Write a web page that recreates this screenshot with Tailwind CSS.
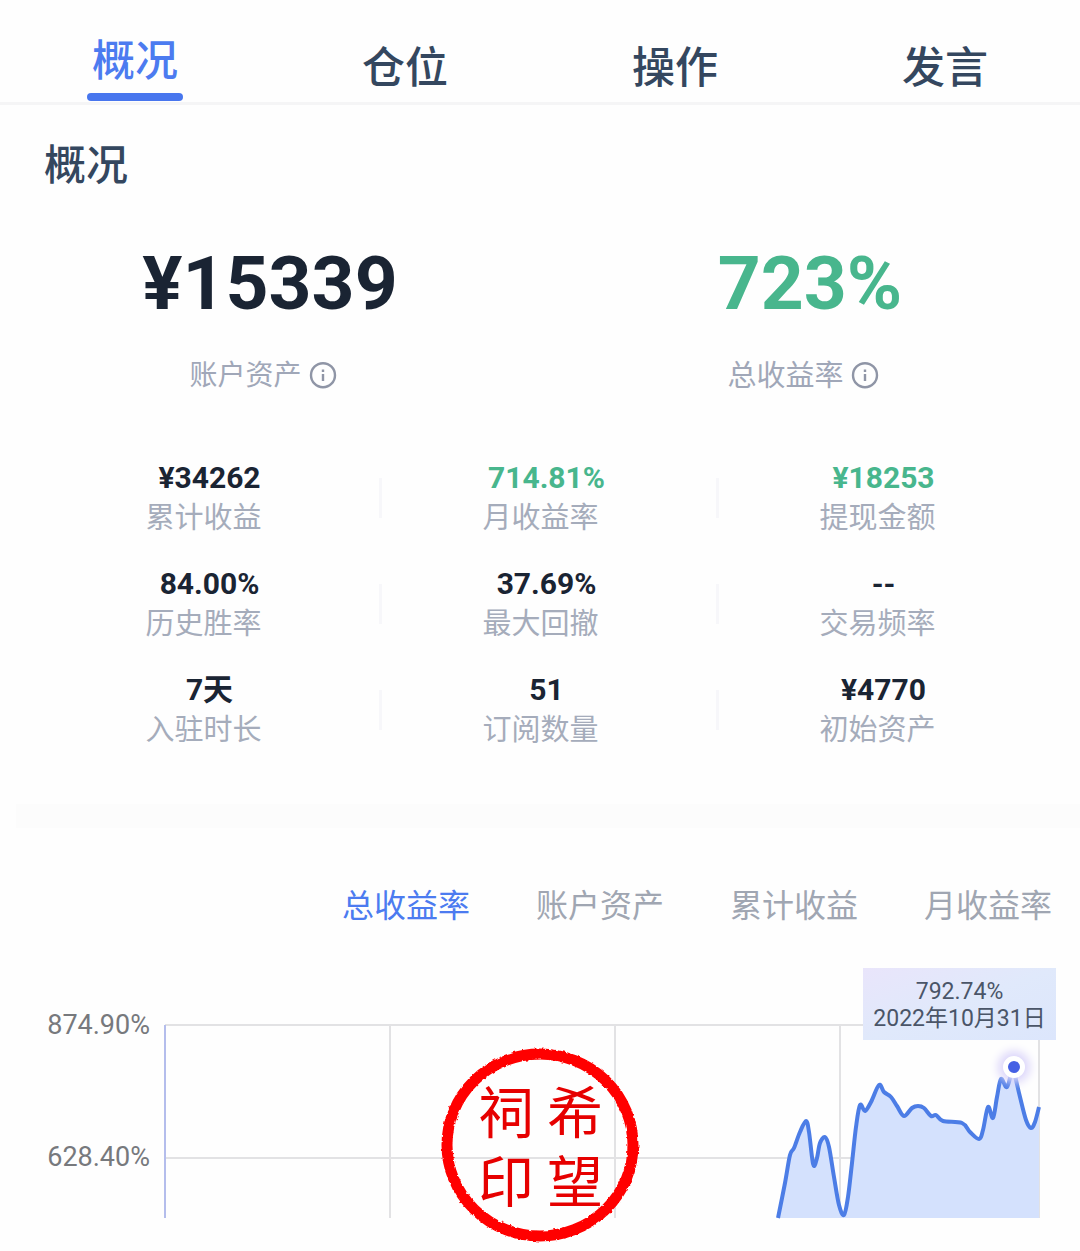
<!DOCTYPE html>
<html lang="zh-CN">
<head>
    <meta charset="UTF-8">
    <meta name="viewport" content="width=device-width, initial-scale=1.0">
    <title>概况</title>
    <script src="https://cdn.jsdelivr.net/npm/@tailwindcss/browser@4"></script>
    <script>
        document.addEventListener('DOMContentLoaded', function() {
            // Points of the return curve, in the 875 x 193 plot area
            const points = [
                [613,193],[620,158],[625,130],[629,123],[635,107],[641,96],[644,107],[647,132],[649,141],[652,133],
                [655,118],[660,112],[664,122],[669,152],[674,180],[679,190],[683,172],[687,138],[691,102],[695,80],
                [700,86],[706,77],[714,60],[719,67],[726,72],[732,81],[739,91],[747,83],[753,81],[759,83],[766,91],
                [771,90],[778,96],[797,98],[805,107],[814,114],[818,105],[823,82],[828,93],[832,72],[836,54],
                [842,62],[848,43],[851,55],[855,72],[861,95],[866,103],[870,97],[874,82]
            ];
            let line = `M${points[0]}`;
            for (let i = 0; i < points.length - 1; i++) {
                const p0 = points[i - 1] || points[i];
                const p1 = points[i];
                const p2 = points[i + 1];
                const p3 = points[i + 2] || p2;
                line += ` C${p1[0] + (p2[0] - p0[0]) / 6},${p1[1] + (p2[1] - p0[1]) / 6}`;
                line += ` ${p2[0] - (p3[0] - p1[0]) / 6},${p2[1] - (p3[1] - p1[1]) / 6} ${p2}`;
            }
            document.getElementById('curve').setAttribute('d', line);
            document.getElementById('area').setAttribute('d', `${line} V193 H613 Z`);
        });
    </script>
</head>
<body class="bg-[#fefefe] font-[Roboto,'Noto_Sans_CJK_SC',sans-serif] text-[#1a2433]">
    <nav class="grid h-[105px] grid-cols-4 border-b-3 border-[#f5f5f6] text-[43px] leading-[64px] font-medium text-[#34475f]">
        <button class="flex flex-col items-center pt-[29px] text-[#4c7bf0]">概况<span class="h-2 w-24 rounded-sm bg-[#4876ee]"></span></button>
        <button class="flex justify-center pt-[36px]">仓位</button>
        <button class="flex justify-center pt-[36px]">操作</button>
        <button class="flex justify-center pt-[36px]">发言</button>
    </nav>

    <main>
        <!-- Account overview -->
        <section>
            <h1 class="pt-[29px] pl-[44px] text-[42px] leading-[64px] font-medium text-[#34475f]">概况</h1>
            <div class="mt-[45px] grid grid-cols-2 text-center">
                <div>
                    <p class="text-[75px] leading-[80px] font-bold">¥15339</p>
                    <p class="mt-[33px] flex items-center justify-center gap-[7px] pr-[14px] text-[28px] leading-[40px] text-[#a0a7b8]">账户资产
                        <svg class="size-7" viewBox="0 0 28 28" fill="none" stroke="#8f95a6" stroke-width="2.4"><circle cx="14" cy="13.2" r="12"/><path d="M14 12v7M14 7.5v2.6"/></svg>
                    </p>
                </div>
                <div>
                    <p class="text-[75px] leading-[80px] font-bold text-[#48b68d]">723%</p>
                    <p class="mt-[33px] flex items-center justify-center gap-[7px] pr-[14px] text-[29px] leading-[40px] text-[#a0a7b8]">总收益率
                        <svg class="size-7" viewBox="0 0 28 28" fill="none" stroke="#8f95a6" stroke-width="2.4"><circle cx="14" cy="13.2" r="12"/><path d="M14 12v7M14 7.5v2.6"/></svg>
                    </p>
                </div>
            </div>

            <dl class="mt-[62px] grid grid-cols-3 gap-y-[26px] pr-[34px] pl-[35px] text-center text-[29px] leading-[40px] text-[#a5acbb]">
                <div class="relative flex flex-col-reverse after:absolute after:top-5 after:-right-[10px] after:h-10 after:w-[3px] after:bg-[#f7f7fa]">
                    <dt>累计收益</dt>
                    <dd class="pl-3 text-[30px] font-bold text-[#1a2433]">¥34262</dd>
                </div>
                <div class="relative flex flex-col-reverse after:absolute after:top-5 after:-right-[10px] after:h-10 after:w-[3px] after:bg-[#f7f7fa]">
                    <dt>月收益率</dt>
                    <dd class="pl-3 text-[30px] font-bold text-[#48b68d]">714.81%</dd>
                </div>
                <div class="flex flex-col-reverse">
                    <dt>提现金额</dt>
                    <dd class="pl-3 text-[30px] font-bold text-[#48b68d]">¥18253</dd>
                </div>
                <div class="relative flex flex-col-reverse after:absolute after:top-5 after:-right-[10px] after:h-10 after:w-[3px] after:bg-[#f7f7fa]">
                    <dt>历史胜率</dt>
                    <dd class="pl-3 text-[30px] font-bold text-[#1a2433]">84.00%</dd>
                </div>
                <div class="relative flex flex-col-reverse after:absolute after:top-5 after:-right-[10px] after:h-10 after:w-[3px] after:bg-[#f7f7fa]">
                    <dt>最大回撤</dt>
                    <dd class="pl-3 text-[30px] font-bold text-[#1a2433]">37.69%</dd>
                </div>
                <div class="flex flex-col-reverse">
                    <dt>交易频率</dt>
                    <dd class="pl-3 text-[30px] font-bold text-[#1a2433]">--</dd>
                </div>
                <div class="relative flex flex-col-reverse after:absolute after:top-5 after:-right-[10px] after:h-10 after:w-[3px] after:bg-[#f7f7fa]">
                    <dt>入驻时长</dt>
                    <dd class="pl-3 text-[30px] font-bold text-[#1a2433]">7天</dd>
                </div>
                <div class="relative flex flex-col-reverse after:absolute after:top-5 after:-right-[10px] after:h-10 after:w-[3px] after:bg-[#f7f7fa]">
                    <dt>订阅数量</dt>
                    <dd class="pl-3 text-[30px] font-bold text-[#1a2433]">51</dd>
                </div>
                <div class="flex flex-col-reverse">
                    <dt>初始资产</dt>
                    <dd class="pl-3 text-[30px] font-bold text-[#1a2433]">¥4770</dd>
                </div>
            </dl>
        </section>

        <div class="mt-[54px] ml-4 h-6 bg-[#fcfcfc]"></div>

        <!-- Return chart -->
        <section>
            <div class="mt-[54px] flex justify-end gap-[66px] pr-7 text-[32px] leading-[48px] text-[#a0a6b2]">
                <button class="text-[#4c7bf0]">总收益率</button>
                <button>账户资产</button>
                <button>累计收益</button>
                <button>月收益率</button>
            </div>

            <div class="mt-[95px] flex pr-10 pb-8">
                <div class="w-[165px] shrink-0 pr-[15px] text-right text-[27px] leading-[32px] text-[#77797d]">
                    <p class="-mt-4">874.90%</p>
                    <p class="mt-[100px]">628.40%</p>
                </div>
                <div class="relative h-[193px] grow">
                    <svg class="size-full overflow-visible" viewBox="0 0 875 193" preserveAspectRatio="none" fill="none">
                        <path d="M0 0H875M0 133H875M225 0V193M450 0V193M675 0V193M874 0V193" stroke="#e2e2e4" stroke-width="2" vector-effect="non-scaling-stroke"/>
                        <path d="M0 0V193" stroke="#b4bdec" stroke-width="2" vector-effect="non-scaling-stroke"/>
                        <path id="area" fill="#d4e1fd"/>
                        <path id="curve" stroke="#4c7de6" stroke-width="4" stroke-linejoin="round" vector-effect="non-scaling-stroke"/>
                    </svg>
                    <span class="absolute top-[22%] left-[97%] size-[22px] -translate-1/2 rounded-full border-[5px] border-white bg-[#4560e4] shadow-[0_0_10px_5px_#dcd6fa]"></span>
                    <div class="absolute -top-[57px] -right-4 w-[193px] bg-linear-to-br from-[#e9e5fb] via-[#e0e9fb] to-[#dce6fc] pt-[10px] pb-[8px] text-center text-[23px] leading-[27px] text-[#4a5568]">
                        <p>792.74%</p>
                        <p class="whitespace-nowrap">2022年10月31日</p>
                    </div>
                    <!-- Seal -->
                    <svg class="absolute top-[20px] left-[43%] h-[200px] w-[200px] -translate-x-1/2" viewBox="0 0 200 200">
                        <filter id="rough" x="-5%" y="-5%" width="110%" height="110%">
                            <feTurbulence type="fractalNoise" baseFrequency="0.25" numOctaves="2" seed="4"/>
                            <feDisplacementMap in="SourceGraphic" scale="3" xChannelSelector="R" yChannelSelector="G"/>
                        </filter>
                        <ellipse cx="99" cy="100" rx="93" ry="91" fill="none" stroke="#f00" stroke-width="11" filter="url(#rough)"/>
                        <g class="font-['Noto_Sans_CJK_SC',sans-serif] text-[56px] font-normal" fill="#e60000" text-anchor="middle">
                            <text x="65" y="88">祠</text>
                            <text x="134" y="88">希</text>
                            <text x="65" y="157">印</text>
                            <text x="134" y="157">望</text>
                        </g>
                    </svg>
                </div>
            </div>
        </section>
    </main>
</body>
</html>
